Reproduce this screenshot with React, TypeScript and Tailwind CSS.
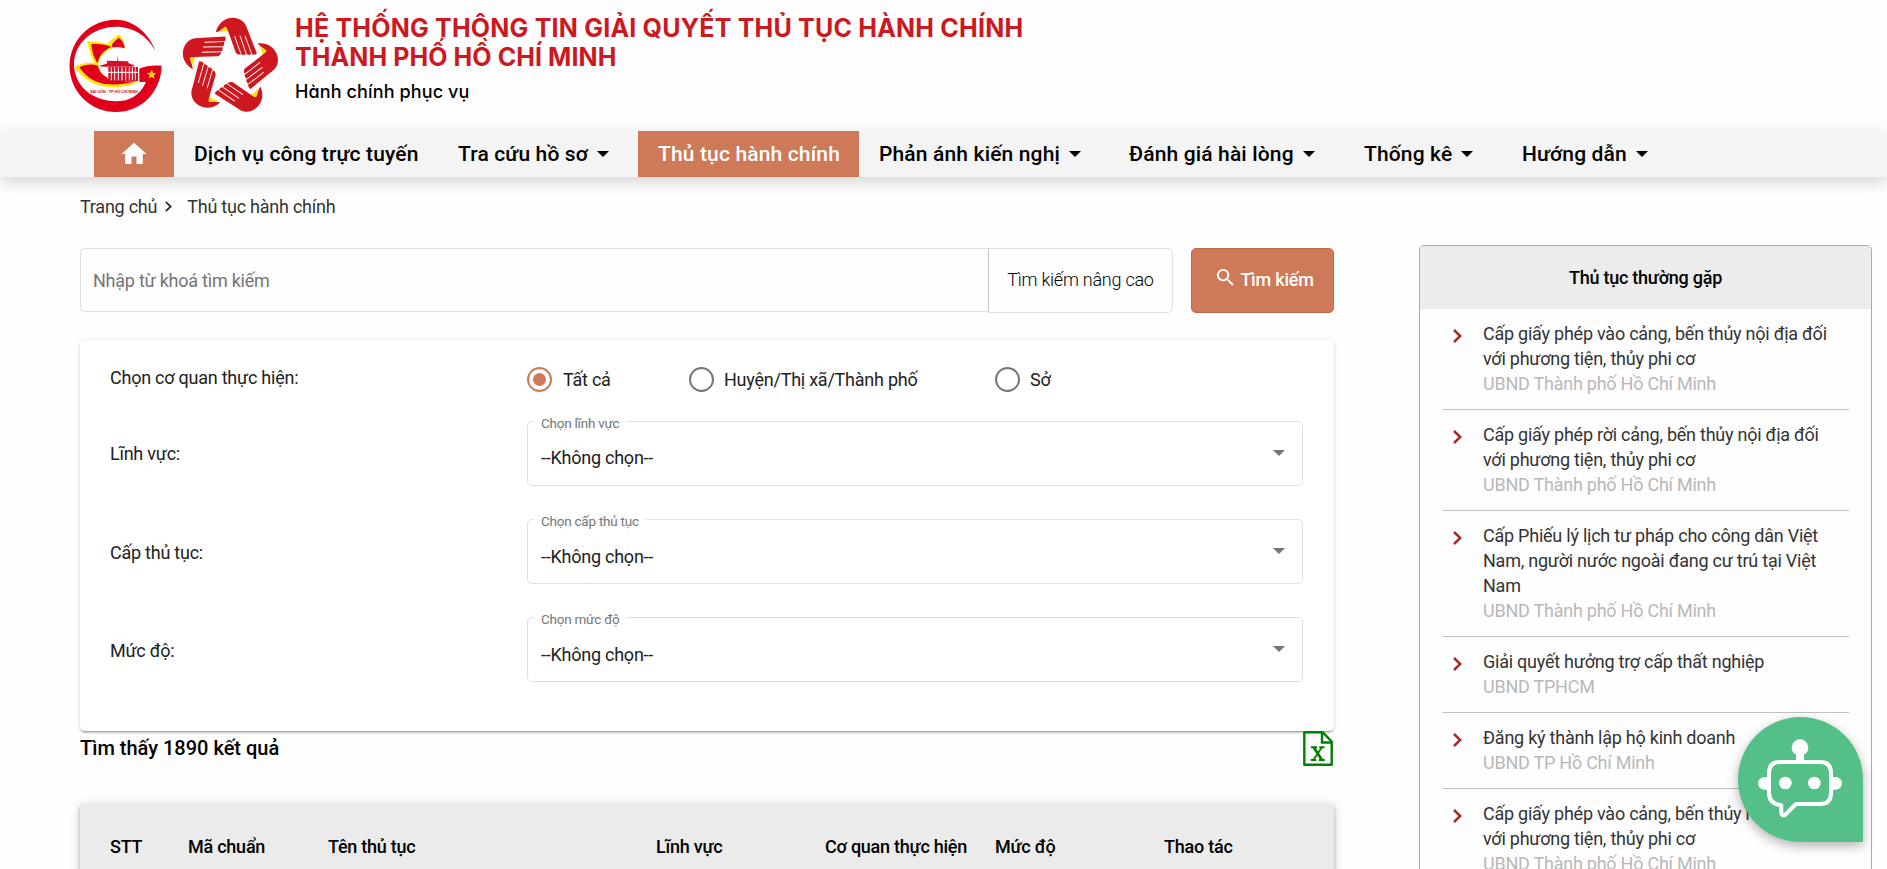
import React from "react";
import { MdHome, MdSearch } from "react-icons/md";

const menu = [
  { label: "Dịch vụ công trực tuyến", caret: false, active: false, width: "w-[264px]" },
  { label: "Tra cứu hồ sơ", caret: true, active: false, width: "w-[200px]" },
  { label: "Thủ tục hành chính", caret: false, active: true, width: "w-[221px]" },
  { label: "Phản ánh kiến nghị", caret: true, active: false, width: "w-[250px]" },
  { label: "Đánh giá hài lòng", caret: true, active: false, width: "w-[235px]" },
  { label: "Thống kê", caret: true, active: false, width: "w-[158px]" },
  { label: "Hướng dẫn", caret: true, active: false, width: "w-[170px]" },
];

const filters = [
  { label: "Lĩnh vực:", legend: "Chọn lĩnh vực", labelOffset: "pt-[28px]", valueOffset: "pt-[20px]" },
  { label: "Cấp thủ tục:", legend: "Chọn cấp thủ tục", labelOffset: "pt-[29px]", valueOffset: "pt-[21px]" },
  { label: "Mức độ:", legend: "Chọn mức độ", labelOffset: "pt-[29px]", valueOffset: "pt-[21px]" },
];

const columns = [
  { label: "STT", width: "w-[78px]" },
  { label: "Mã chuẩn", width: "w-[140px]" },
  { label: "Tên thủ tục", width: "w-[328px]" },
  { label: "Lĩnh vực", width: "w-[169px]" },
  { label: "Cơ quan thực hiện", width: "w-[170px]" },
  { label: "Mức độ", width: "w-[169px]" },
  { label: "Thao tác", width: "w-[140px]" },
];

const popular = [
  { title: "Cấp giấy phép vào cảng, bến thủy nội địa đối với phương tiện, thủy phi cơ", org: "UBND Thành phố Hồ Chí Minh" },
  { title: "Cấp giấy phép rời cảng, bến thủy nội địa đối với phương tiện, thủy phi cơ", org: "UBND Thành phố Hồ Chí Minh" },
  { title: "Cấp Phiếu lý lịch tư pháp cho công dân Việt Nam, người nước ngoài đang cư trú tại Việt Nam", org: "UBND Thành phố Hồ Chí Minh" },
  { title: "Giải quyết hưởng trợ cấp thất nghiệp", org: "UBND TPHCM" },
  { title: "Đăng ký thành lập hộ kinh doanh", org: "UBND TP Hồ Chí Minh" },
  { title: "Cấp giấy phép vào cảng, bến thủy nội địa đối với phương tiện, thủy phi cơ", org: "UBND Thành phố Hồ Chí Minh" },
];

function CityLogo() {
  return (
    <svg viewBox="57 54 282 282" className="h-[94px] w-[94px] shrink-0">
      <path
        fill="#e0001c"
        d="M317 151C297 96 250 56 197 56A138.500 138.500 0 0 0 197 333C275 333 333 272 335 194C310 192 288 194 268 203V243H288C270 283 238 301 198 301C125 301 72 252 72 190C72 126 130 77 197 77C250 77 293 105 317 151Z"
      />
      <path
        fill="#ffe500"
        d="M73 199C90 187 110 183 134 186C121 164 117 146 111 119C132 124 152 120 172 130C181 116 195 108 207 101C217 109 224 122 224 143C200 136 170 142 152 170C144 185 148 205 156 218C180 240 220 246 266 244C235 257 200 261 166 257C122 251 96 228 73 199Z"
      />
      <path
        fill="#e0001c"
        d="M88 199C108 189 128 188 144 194C150 226 178 242 262 241C225 250 190 253 160 248C126 241 106 224 88 199ZM124 129C150 128 166 129 184 138C160 148 146 166 143 187C130 168 126 150 124 129ZM185 132C191 122 200 115 206 110C217 117 223 128 224 142C211 137 198 137 188 139Z"
      />
      <path fill="#fefefe" d="M224 143C195 136 168 144 152 170C144 184 145 192 147 200L175 235V198H255L250 180Z" />
      <path
        fill="#d5102a"
        d="M145 195C158 192 166 190 172 186L170 179L202 180L203 163L205 180L236 181L234 185C240 189 247 190 254 192L248 197H160ZM175 198H264V240H175Z"
      />
      <path
        stroke="#fff"
        strokeWidth="3"
        d="M184 199V238M194 199V238M205 199V238M216 199V238M227 199V238M238 199V238M247 199V238M256 199V238M174 214H264"
      />
      <path fill="#ffe500" d="M306 206L309 216L319 217L311 223L314 233L305 227L296 232L299 222L290 216L301 215Z" />
      <text
        x="120"
        y="275"
        fill="#e0001c"
        fontSize="12"
        fontWeight="700"
        textLength="144"
        lengthAdjust="spacingAndGlyphs"
        fontFamily="Liberation Sans, sans-serif"
      >
        SÀI GÒN - TP HỒ CHÍ MINH
      </text>
    </svg>
  );
}

function StarLogo() {
  return (
    <svg viewBox="396 52 291 286" className="mb-[3px] h-[95px] w-[97px] shrink-0">
      {[0, 72, 144, 216, 288].map((angle) => (
        <g key={angle} transform={`rotate(${angle} 541 202)`}>
          <path fill="#ffdd0d" d="M508 99L531 78L540 96C529 93 520 95 508 99Z" />
          <path
            fill="#cd181f"
            d="M500 99C506 72 526 53 554 54C577 56 590 69 595 88L624 162C617 167 611 167 608 163C602 168 595 167 592 163C586 168 580 167 577 164C570 167 562 163 560 158L536 91C532 82 530 80 528 81C520 86 512 96 500 99Z"
          />
          <path stroke="#fff" strokeWidth="2.800" d="M557 110L576 163M573 108L592 163M588 108L608 163" />
        </g>
      ))}
    </svg>
  );
}

function ExcelIcon() {
  return (
    <svg viewBox="0 0 30 35" className="mr-px h-[35px] w-[30px]" fill="none" stroke="#008000">
      <path strokeWidth="2.400" strokeLinejoin="round" d="M1.300 1.200H19.500L28.700 10.500V33.700H1.300Z" />
      <path strokeWidth="2.400" d="M19 1.500V11.500H28.500" />
      <path strokeWidth="2.800" d="M10.800 16.500L18.800 28.800" />
      <path strokeWidth="1.800" d="M18.800 16.500L10.500 28.800" />
      <path strokeWidth="2" d="M8 16.200H14M16.300 16.200H21.500M7.800 29H13.300M15.800 29H21.800" />
    </svg>
  );
}

function Chevron({ className }: { className: string }) {
  return (
    <svg viewBox="0 0 9 14" className={className} fill="none" stroke="currentColor" strokeWidth="2.500">
      <path d="M1 1L7.300 7L1 13" />
    </svg>
  );
}

function Caret({ className }: { className: string }) {
  return (
    <svg viewBox="0 0 12 6" preserveAspectRatio="none" className={className} fill="currentColor">
      <path d="M0 0H12L6 6Z" />
    </svg>
  );
}

function Radio({ checked }: { checked: boolean }) {
  return checked ? (
    <span className="flex h-[25px] w-[25px] items-center justify-center rounded-full border-2 border-[#ce7a58]">
      <span className="h-[13px] w-[13px] rounded-full bg-[#ce7a58]" />
    </span>
  ) : (
    <span className="h-[25px] w-[25px] rounded-full border-2 border-[#757575]" />
  );
}

function SelectField({ legend, valueOffset }: { legend: string; valueOffset: string }) {
  return (
    <fieldset className="h-[71px] w-[776px] rounded-[5px] border border-[#e0e0e0] pl-[6px]">
      <legend className="h-3 px-[7px] text-[13.500px] leading-4 text-[#757575]">{legend}</legend>
      <div className="flex items-start justify-between pr-[17px]">
        <span className={`ml-[7px] leading-[22px] text-[#212121] ${valueOffset}`}>--Không chọn--</span>
        <Caret className="mt-[23px] h-[6px] w-3 text-[#757575]" />
      </div>
    </fieldset>
  );
}

function ChatBot() {
  return (
    <button className="fixed right-6 bottom-[27px] h-[125px] w-[125px] rounded-full rounded-br-none bg-[#54c088] shadow-[0_4px_12px_rgba(0,0,0,0.3)]">
      <svg viewBox="0 0 375 375" className="h-full w-full" fill="none">
        <circle cx="186" cy="92" r="25" fill="#fff" />
        <path stroke="#fff" strokeWidth="24" d="M186 105V135" />
        <path fill="#fff" d="M90 180V218H79A19 19 0 0 1 79 180ZM282 180V218H293A19 19 0 0 0 293 180Z" />
        <path
          stroke="#fff"
          strokeWidth="12"
          strokeLinejoin="round"
          d="M126 135H246Q279 135 279 168V228Q279 261 246 261H174L142 293Q133 298 130 289V265Q93 261 93 228V168Q93 135 126 135Z"
        />
        <circle cx="142" cy="198" r="19" fill="#fff" />
        <circle cx="229" cy="198" r="19" fill="#fff" />
      </svg>
    </button>
  );
}

export default function App() {
  return (
    <div className="h-[869px] w-full overflow-hidden bg-[#fefefe] font-['Roboto','Noto_Sans',sans-serif] text-[18px] tracking-[-0.24px] text-[#212121]">
      <header className="flex h-[131px] items-start pl-[69px]">
        <div className="flex items-center gap-[18px] pt-[17px]">
          <CityLogo />
          <StarLogo />
        </div>
        <div className="ml-[17px] pt-[14px] font-['Inter',sans-serif] [font-feature-settings:'cv11']">
          <h1 className="text-[25px] leading-[29px] font-bold whitespace-nowrap text-[#cd181f]">
            <span className="tracking-[0.21px]">HỆ THỐNG THÔNG TIN GIẢI QUYẾT THỦ TỤC HÀNH CHÍNH</span>
            <br />
            <span className="tracking-[0.08px]">THÀNH PHỐ HỒ CHÍ MINH</span>
          </h1>
          <p className="mt-[8px] text-[18px] leading-6 font-medium tracking-[0.12px] text-black">Hành chính phục vụ</p>
        </div>
      </header>

      <nav className="flex h-[46px] bg-[#f4f4f4] pl-[94px] shadow-[0_5px_16px_rgba(0,0,0,0.17)]">
        <a className="flex w-20 items-center justify-center bg-[#ce7a58] text-white">
          <MdHome className="h-[30px] w-[30px]" />
        </a>
        {menu.map((item) => (
          <a
            key={item.label}
            className={`flex shrink-0 items-center pt-px pl-5 text-[21px] font-medium tracking-[0.15px] whitespace-nowrap ${item.width} ${
              item.active ? "bg-[#ce7a58] text-white" : "text-black"
            }`}
          >
            {item.label}
            {item.caret && <Caret className="mb-px ml-[9px] h-[6px] w-3" />}
          </a>
        ))}
      </nav>

      <div className="flex">
        <main className="ml-20 w-[1254px] shrink-0">
          <div className="flex h-[71px] items-start pt-[19px] leading-[22px] text-[#333]">
            <span>Trang chủ</span>
            <Chevron className="mt-[5px] ml-2 h-[11px] w-[7px]" />
            <span className="ml-[15px]">Thủ tục hành chính</span>
          </div>

          <div className="flex items-start">
            <div className="flex h-[64px] w-[908px] items-center rounded-l-[5px] border border-r-0 border-[#e0e0e0] pl-3 text-[#757575]">
              Nhập từ khoá tìm kiếm
            </div>
            <div className="flex h-[65px] w-[185px] items-center justify-center rounded-r-[5px] border border-[#e0e0e0] border-l-[#c4c4c4] pb-[2px] font-light text-black">
              Tìm kiếm nâng cao
            </div>
            <button className="ml-[18px] flex h-[65px] w-[143px] items-center justify-center rounded-[5px] border border-[#bd6a49] bg-[#ce7a58] pb-[2px] pl-[3px] font-medium text-white">
              <MdSearch className="mr-[3px] mb-1 h-[23px] w-[23px]" />
              Tìm kiếm
            </button>
          </div>

          <section className="mt-[27px] h-[391px] rounded-[5px] bg-white pl-[30px] shadow-[0_3px_1px_-2px_rgba(0,0,0,0.2),0_2px_2px_0_rgba(0,0,0,0.14),0_1px_5px_0_rgba(0,0,0,0.12)]">
            <div className="flex h-[75px] items-center">
              <span className="w-[417px] pb-px">Chọn cơ quan thực hiện:</span>
              <label className="flex w-[162px] items-center gap-[11px] pt-1">
                <Radio checked />
                Tất cả
              </label>
              <label className="flex w-[306px] items-center gap-[10px] pt-1">
                <Radio checked={false} />
                Huyện/Thị xã/Thành phố
              </label>
              <label className="flex items-center gap-[10px] pt-1">
                <Radio checked={false} />
                Sở
              </label>
            </div>
            {filters.map((f) => (
              <div key={f.label} className="flex h-[98px] items-start">
                <span className={`w-[417px] leading-[22px] ${f.labelOffset}`}>{f.label}</span>
                <SelectField legend={f.legend} valueOffset={f.valueOffset} />
              </div>
            ))}
          </section>

          <div className="flex h-[73px] items-start justify-between">
            <h2 className="pt-[5px] text-[20px] leading-6 font-medium tracking-normal text-black">Tìm thấy 1890 kết quả</h2>
            <ExcelIcon />
          </div>

          <div className="flex h-24 items-start bg-[#ebebeb] pt-[31px] pl-[30px] leading-6 font-medium text-black shadow-[0_2px_4px_-1px_rgba(0,0,0,0.2),0_4px_5px_0_rgba(0,0,0,0.14),0_1px_10px_0_rgba(0,0,0,0.16)]">
            {columns.map((c) => (
              <span key={c.label} className={`shrink-0 whitespace-nowrap ${c.width}`}>
                {c.label}
              </span>
            ))}
          </div>
        </main>

        <aside className="mt-[68px] ml-[85px] h-[900px] w-[453px] shrink-0 rounded-[5px] border border-[#aaa]">
          <h3 className="flex h-[63px] items-center justify-center rounded-t-[4px] bg-[#ececec] font-medium text-black">
            Thủ tục thường gặp
          </h3>
          <ul className="mr-[22px] ml-[23px]">
            {popular.map((p, i) => (
              <li key={i} className="flex border-b border-[#c0c0c0] pt-3 pb-[13px] leading-[25px]">
                <Chevron className="mt-2 ml-[10px] h-[14px] w-[9px] shrink-0 text-[#a52a2a]" />
                <div className="ml-[21px] w-[352px]">
                  <p className="text-[#333]">{p.title}</p>
                  <p className="text-[#b8b8b8]">{p.org}</p>
                </div>
              </li>
            ))}
          </ul>
        </aside>
      </div>
      <ChatBot />
    </div>
  );
}
